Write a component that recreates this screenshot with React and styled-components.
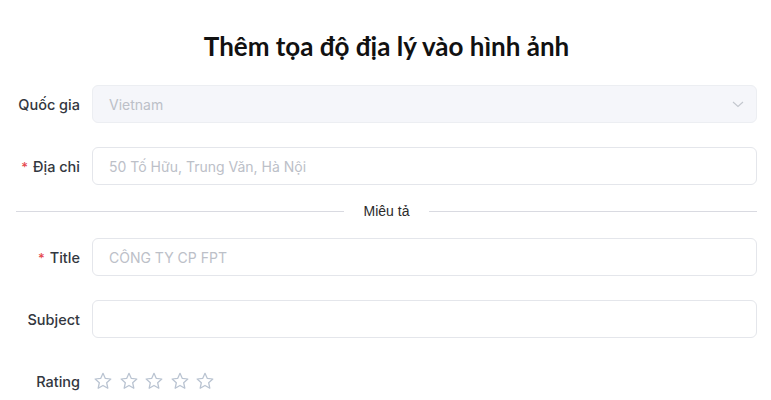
import React from 'react';
import styled, { createGlobalStyle } from 'styled-components';

const GlobalStyle = createGlobalStyle`
  body {
    margin: 0;
    background: #ffffff;
    font-family: "Inter", "Liberation Sans", sans-serif;
  }
`;

// Page wrapper
const Page = styled.div`
  width: 771px;
  display: flex;
  flex-direction: column;
  padding: 0 14px 0 16px;
  box-sizing: border-box;
`;

// Heading
const Heading = styled.h1`
  margin: 0;
  padding: 28px 0 20px;
  line-height: 37px;
  text-align: center;
  font-family: "Lato", "Noto Sans", sans-serif;
  font-size: 26px;
  font-weight: 700;
  color: #111111;
`;

// Form row
const Row = styled.div`
  display: grid;
  grid-template-columns: 64px 1fr;
  column-gap: 12px;
  align-items: center;
  height: 38px;
  margin-bottom: ${({ $last }) => ($last ? '0' : '24px')};
`;

const Label = styled.label`
  text-align: right;
  white-space: nowrap;
  font-size: 14.5px;
  font-weight: 500;
  color: #333740;
`;

const Required = styled.span`
  color: #e5484d;
  margin-right: 5px;
  font-size: 13px;
`;

const Field = styled.div`
  position: relative;
  height: 38px;
  box-sizing: border-box;
  border: 1px solid ${({ $disabled }) => ($disabled ? '#eceef2' : '#e4e6eb')};
  border-radius: 6px;
  background: ${({ $disabled }) => ($disabled ? '#f5f6fa' : '#ffffff')};
  display: flex;
  align-items: center;
  padding: 0 16px;
`;

const Input = styled.input`
  border: none;
  outline: none;
  background: transparent;
  width: 100%;
  padding: 0;
  font-family: "Inter", "Liberation Sans", sans-serif;
  font-size: 14px;
  color: #333740;

  &::placeholder {
    color: #bcc0c8;
  }
`;

const Value = styled.span`
  flex: 1;
  font-size: 14px;
  color: #bcc0c8;
`;

const Chevron = styled.svg`
  width: 12px;
  height: 12px;
  margin-right: -4px;
`;

// Divider
const Divider = styled.div`
  display: flex;
  align-items: center;
  gap: 20px;
  height: 20px;
  margin: -8px 0 17px;
  font-family: "Liberation Sans", sans-serif;
  font-size: 14px;
  color: #2b2b2b;

  &::before,
  &::after {
    content: '';
    flex: 1;
    height: 1px;
    background: #d9dae1;
  }
`;

const Stars = styled.div`
  display: flex;
  gap: 5.6px;
  padding-left: 1px;
`;

const StarIcon = styled.svg`
  width: 20px;
  height: 20px;
`;

function Star() {
  return (
    <StarIcon viewBox="0 0 24 24" fill="none" stroke="#b9c3d1" strokeWidth="1.5" strokeLinejoin="round">
      <polygon points="12 2.8 14.8 8.9 21.4 9.6 16.4 14.1 17.8 20.7 12 17.3 6.2 20.7 7.6 14.1 2.6 9.6 9.2 8.9" />
    </StarIcon>
  );
}

export default function App() {
  return (
    <>
      <GlobalStyle />
      <Page>
        <Heading>Thêm tọa độ địa lý vào hình ảnh</Heading>

        <Row>
          <Label>Quốc gia</Label>
          <Field $disabled>
            <Value>Vietnam</Value>
            <Chevron viewBox="0 0 12 12" fill="none" stroke="#c3c7ce" strokeWidth="1.1">
              <polyline points="1 4 6 8.5 11 4" />
            </Chevron>
          </Field>
        </Row>

        <Row>
          <Label><Required>*</Required>Địa chỉ</Label>
          <Field>
            <Input placeholder="50 Tố Hữu, Trung Văn, Hà Nội" />
          </Field>
        </Row>

        <Divider>Miêu tả</Divider>

        <Row>
          <Label><Required>*</Required>Title</Label>
          <Field>
            <Input placeholder="CÔNG TY CP FPT" />
          </Field>
        </Row>

        <Row>
          <Label>Subject</Label>
          <Field>
            <Input />
          </Field>
        </Row>

        <Row $last>
          <Label>Rating</Label>
          <Stars>
            {[0, 1, 2, 3, 4].map((i) => (
              <Star key={i} />
            ))}
          </Stars>
        </Row>
      </Page>
    </>
  );
}
